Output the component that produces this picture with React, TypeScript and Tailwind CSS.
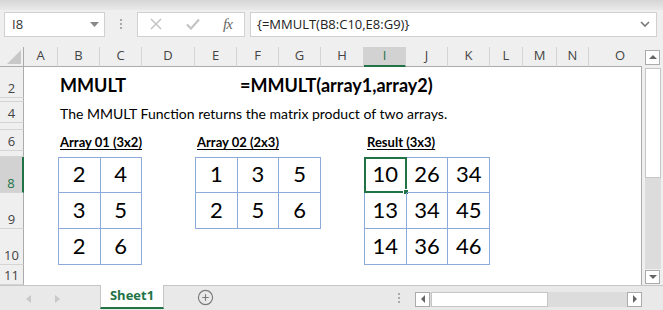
import { CirclePlus } from "lucide-react";

const cols = ["A", "B", "C", "D", "E", "F", "G", "H", "I", "J", "K", "L", "M", "N", "O"];

// excel rows 2..11; the thin rows 3, 5 and 7 show no label
const rows: { label: string; sel?: boolean }[] = [
    { label: "2" },
    { label: "" },
    { label: "4" },
    { label: "" },
    { label: "6" },
    { label: "" },
    { label: "8", sel: true },
    { label: "9" },
    { label: "10" },
    { label: "11" },
];

function NumTable({ data, className, selectFirst }: { data: number[][]; className: string; selectFirst?: boolean }) {
    return (
        <div className={`${className} grid border-l border-t border-[#8eaadb]`}>
            {data.flat().map((n, i) => (
                <div
                    key={i}
                    className="relative flex items-end justify-center border-r border-b border-[#8eaadb] pb-[3px] text-[22px] leading-[30px] text-black"
                >
                    {n}
                    {selectFirst && i === 0 && (
                        <div className="absolute -left-px -top-px -right-px -bottom-px border-2 border-[#217346]">
                            <div className="absolute -right-[4px] -bottom-[4px] w-[6px] h-[6px] bg-[#217346] border border-white" />
                        </div>
                    )}
                </div>
            ))}
        </div>
    );
}

export default function App() {
    return (
        <div className="w-[663px] h-[310px] flex flex-col overflow-hidden bg-[#efefef] font-['Open_Sans',sans-serif] text-[#444]">
            {/* ribbon edge */}
            <div className="h-[10px] bg-gradient-to-b from-[#d6d6d6] to-[#e9e9e9]" />

            {/* formula bar */}
            <div className="h-[26px] mt-[2px] flex items-stretch">
                <div className="ml-[4px] w-[101px] bg-white border border-[#d0d0d0] flex items-center justify-between pl-[7px] pr-[5px] text-[13px] text-[#333]">
                    <span>I8</span>
                    <svg width="9" height="5" viewBox="0 0 9 5"><polygon points="0,0 9,0 4.5,5" fill="#888" /></svg>
                </div>
                <div className="w-[32px] flex flex-col items-center justify-center gap-[2px]">
                    <span className="w-[2px] h-[2px] bg-[#aaa]" />
                    <span className="w-[2px] h-[2px] bg-[#aaa]" />
                    <span className="w-[2px] h-[2px] bg-[#aaa]" />
                </div>
                <div className="w-[108px] bg-white border border-[#d0d0d0] flex items-center pl-[12px]">
                    <svg width="12" height="12" viewBox="0 0 12 12"><path d="M1 1 L11 11 M11 1 L1 11" stroke="#c4c4c4" strokeWidth="1.5" /></svg>
                    <svg className="ml-[24px]" width="14" height="12" viewBox="0 0 14 12"><path d="M1 6.5 L5 10.5 L13 1.5" stroke="#c4c4c4" strokeWidth="2.2" fill="none" /></svg>
                    <span className="ml-[23px] font-['Liberation_Serif',serif] italic text-[15px] text-[#666] tracking-[-1px]">fx</span>
                </div>
                <div className="ml-[5px] w-[407px] bg-white border border-[#d0d0d0] flex items-center justify-between pl-[6px] pr-[6px] text-[13px] text-[#222]">
                    <span>{"{=MMULT(B8:C10,E8:G9)}"}</span>
                    <svg width="10" height="6" viewBox="0 0 10 6"><path d="M1 1 L5 5 L9 1" stroke="#777" strokeWidth="1.6" fill="none" /></svg>
                </div>
            </div>

            <div className="h-[10px]" />

            {/* sheet */}
            <div className="h-[238px] flex">
                <div className="w-[642px] grid grid-cols-[24px_34px_42px_42px_53px_42px_42px_42px_43px_42px_42px_42px_33px_34px_32px_53px] grid-rows-[20px_31px_4px_21px_7px_21px_6px_36px_36px_36px_20px]">
                    {/* corner */}
                    <div className="col-start-1 row-start-1 flex items-end justify-end pr-[2px] pb-[2px] border-b border-r border-[#ababab]">
                        <svg width="14" height="14" viewBox="0 0 14 14"><polygon points="14,0 14,14 0,14" fill="#c8c8c8" /></svg>
                    </div>
                    {cols.map((c) => (
                        <div
                            key={c}
                            className={`row-start-1 flex items-center text-[13px] border-r border-[#d4d4d4] ${
                                c === "I"
                                    ? "bg-[#d2d2d2] border-b-2 border-b-[#217346] text-[#217346] justify-center"
                                    : c === "O"
                                    ? "border-b border-b-[#ababab] pl-[26px] border-r-0"
                                    : "border-b border-b-[#ababab] justify-center"
                            }`}
                        >
                            {c}
                        </div>
                    ))}

                    {/* row headers */}
                    {rows.map((r, i) => (
                        <div
                            key={i}
                            className={`col-start-1 flex items-end justify-center overflow-hidden text-[13px] leading-[16px] pb-[1px] border-b border-[#d4d4d4] ${
                                r.sel
                                    ? "bg-[#d2d2d2] border-r-2 border-r-[#217346] text-[#217346]"
                                    : "border-r border-r-[#ababab]"
                            }`}
                        >
                            {r.label}
                        </div>
                    ))}

                    {/* worksheet background */}
                    <div className="col-start-2 col-span-15 row-start-2 row-span-10 bg-white border-r border-[#ababab]" />

                    {/* content */}
                    <div className="col-start-3 col-span-3 row-start-2 flex items-end pl-[2px] pb-[2px] font-['Lato',sans-serif] font-bold text-[18px] leading-[22px] text-black whitespace-nowrap">
                        MMULT
                    </div>
                    <div className="col-start-7 col-span-6 row-start-2 flex items-end pl-[3px] pb-[2px] font-['Lato',sans-serif] font-bold text-[18px] leading-[22px] text-black whitespace-nowrap">
                        =MMULT(array1,array2)
                    </div>
                    <div className="col-start-3 col-span-12 row-start-4 flex items-end pl-[2px] font-['Lato',sans-serif] text-[14px] leading-[18px] text-black whitespace-nowrap">
                        The MMULT Function returns the matrix product of two arrays.
                    </div>
                    <div className="col-start-3 col-span-3 row-start-6 flex items-end pl-[2px] font-['Lato',sans-serif] font-bold text-[13px] leading-[18px] text-black underline underline-offset-2 whitespace-nowrap">
                        Array 01 (3x2)
                    </div>
                    <div className="col-start-6 col-span-3 row-start-6 flex items-end pl-[2px] font-['Lato',sans-serif] font-bold text-[13px] leading-[18px] text-black underline underline-offset-2 whitespace-nowrap">
                        Array 02 (2x3)
                    </div>
                    <div className="col-start-10 col-span-3 row-start-6 flex items-end pl-[3px] font-['Lato',sans-serif] font-bold text-[13px] leading-[18px] text-black underline underline-offset-2 whitespace-nowrap">
                        Result (3x3)
                    </div>

                    <NumTable
                        className="col-start-3 col-span-2 row-start-8 row-span-3 grid-cols-2 grid-rows-3 font-['Lato',sans-serif]"
                        data={[[2, 4], [3, 5], [2, 6]]}
                    />
                    <NumTable
                        className="col-start-6 col-span-3 row-start-8 row-span-2 grid-cols-3 grid-rows-2 font-['Lato',sans-serif]"
                        data={[[1, 3, 5], [2, 5, 6]]}
                    />
                    <NumTable
                        className="col-start-10 col-span-3 row-start-8 row-span-3 grid-cols-3 grid-rows-3 font-['Lato',sans-serif]"
                        data={[[10, 26, 34], [13, 34, 45], [14, 36, 46]]}
                        selectFirst
                    />
                </div>

                {/* vertical scrollbar */}
                <div className="w-[21px] flex flex-col items-start pl-[3px]">
                    <div className="mt-[3px] w-[15px] h-[15px] bg-white border border-[#ababab] flex items-center justify-center">
                        <svg width="8" height="4" viewBox="0 0 8 4"><polygon points="0,4 8,4 4,0" fill="#666" /></svg>
                    </div>
                    <div className="mt-[3px] w-[16px] flex-1 bg-[#dcdcdc] flex flex-col">
                        <div className="h-[110px] bg-white border border-[#c6c6c6]" />
                    </div>
                    <div className="mt-[1px] mb-px w-[15px] h-[14px] bg-white border border-[#ababab] flex items-center justify-center">
                        <svg width="8" height="4" viewBox="0 0 8 4"><polygon points="0,0 8,0 4,4" fill="#666" /></svg>
                    </div>
                </div>
            </div>

            {/* sheet tabs */}
            <div className="h-[26px] flex items-start border-t border-[#c6c6c6] bg-[#e9e9e9]">
                <div className="ml-[26px] mt-[9px]">
                    <svg width="5" height="8" viewBox="0 0 5 8"><polygon points="5,0 5,8 0,4" fill="#c8c8c8" /></svg>
                </div>
                <div className="ml-[24px] mt-[9px]">
                    <svg width="5" height="8" viewBox="0 0 5 8"><polygon points="0,0 0,8 5,4" fill="#c8c8c8" /></svg>
                </div>
                <div className="ml-[40px] -mt-px w-[64px] h-[24px] bg-white border-l border-r border-[#c6c6c6] border-b-2 border-b-[#217346] flex items-center justify-center text-[13px] font-bold text-[#217346]">
                    Sheet1
                </div>
                <div className="ml-[33px] mt-[3px] text-[#7a7a7a]">
                    <CirclePlus size={17} strokeWidth={1.6} />
                </div>
                <div className="ml-[184px] mt-[7px] flex flex-col gap-[2px]">
                    <span className="w-[2px] h-[2px] bg-[#aaa]" />
                    <span className="w-[2px] h-[2px] bg-[#aaa]" />
                    <span className="w-[2px] h-[2px] bg-[#aaa]" />
                </div>
                <div className="ml-[15px] mt-[6px] w-[227px] h-[15px] flex bg-[#dcdcdc]">
                    <div className="w-[15px] h-[15px] bg-white border border-[#ababab] flex items-center justify-center">
                        <svg width="4" height="8" viewBox="0 0 4 8"><polygon points="4,0 4,8 0,4" fill="#666" /></svg>
                    </div>
                    <div className="ml-px w-[117px] h-[15px] bg-white border border-[#c6c6c6]" />
                    <div className="ml-auto w-[15px] h-[15px] bg-white border border-[#ababab] flex items-center justify-center">
                        <svg width="4" height="8" viewBox="0 0 4 8"><polygon points="0,0 0,8 4,4" fill="#666" /></svg>
                    </div>
                </div>
            </div>
        </div>
    );
}
